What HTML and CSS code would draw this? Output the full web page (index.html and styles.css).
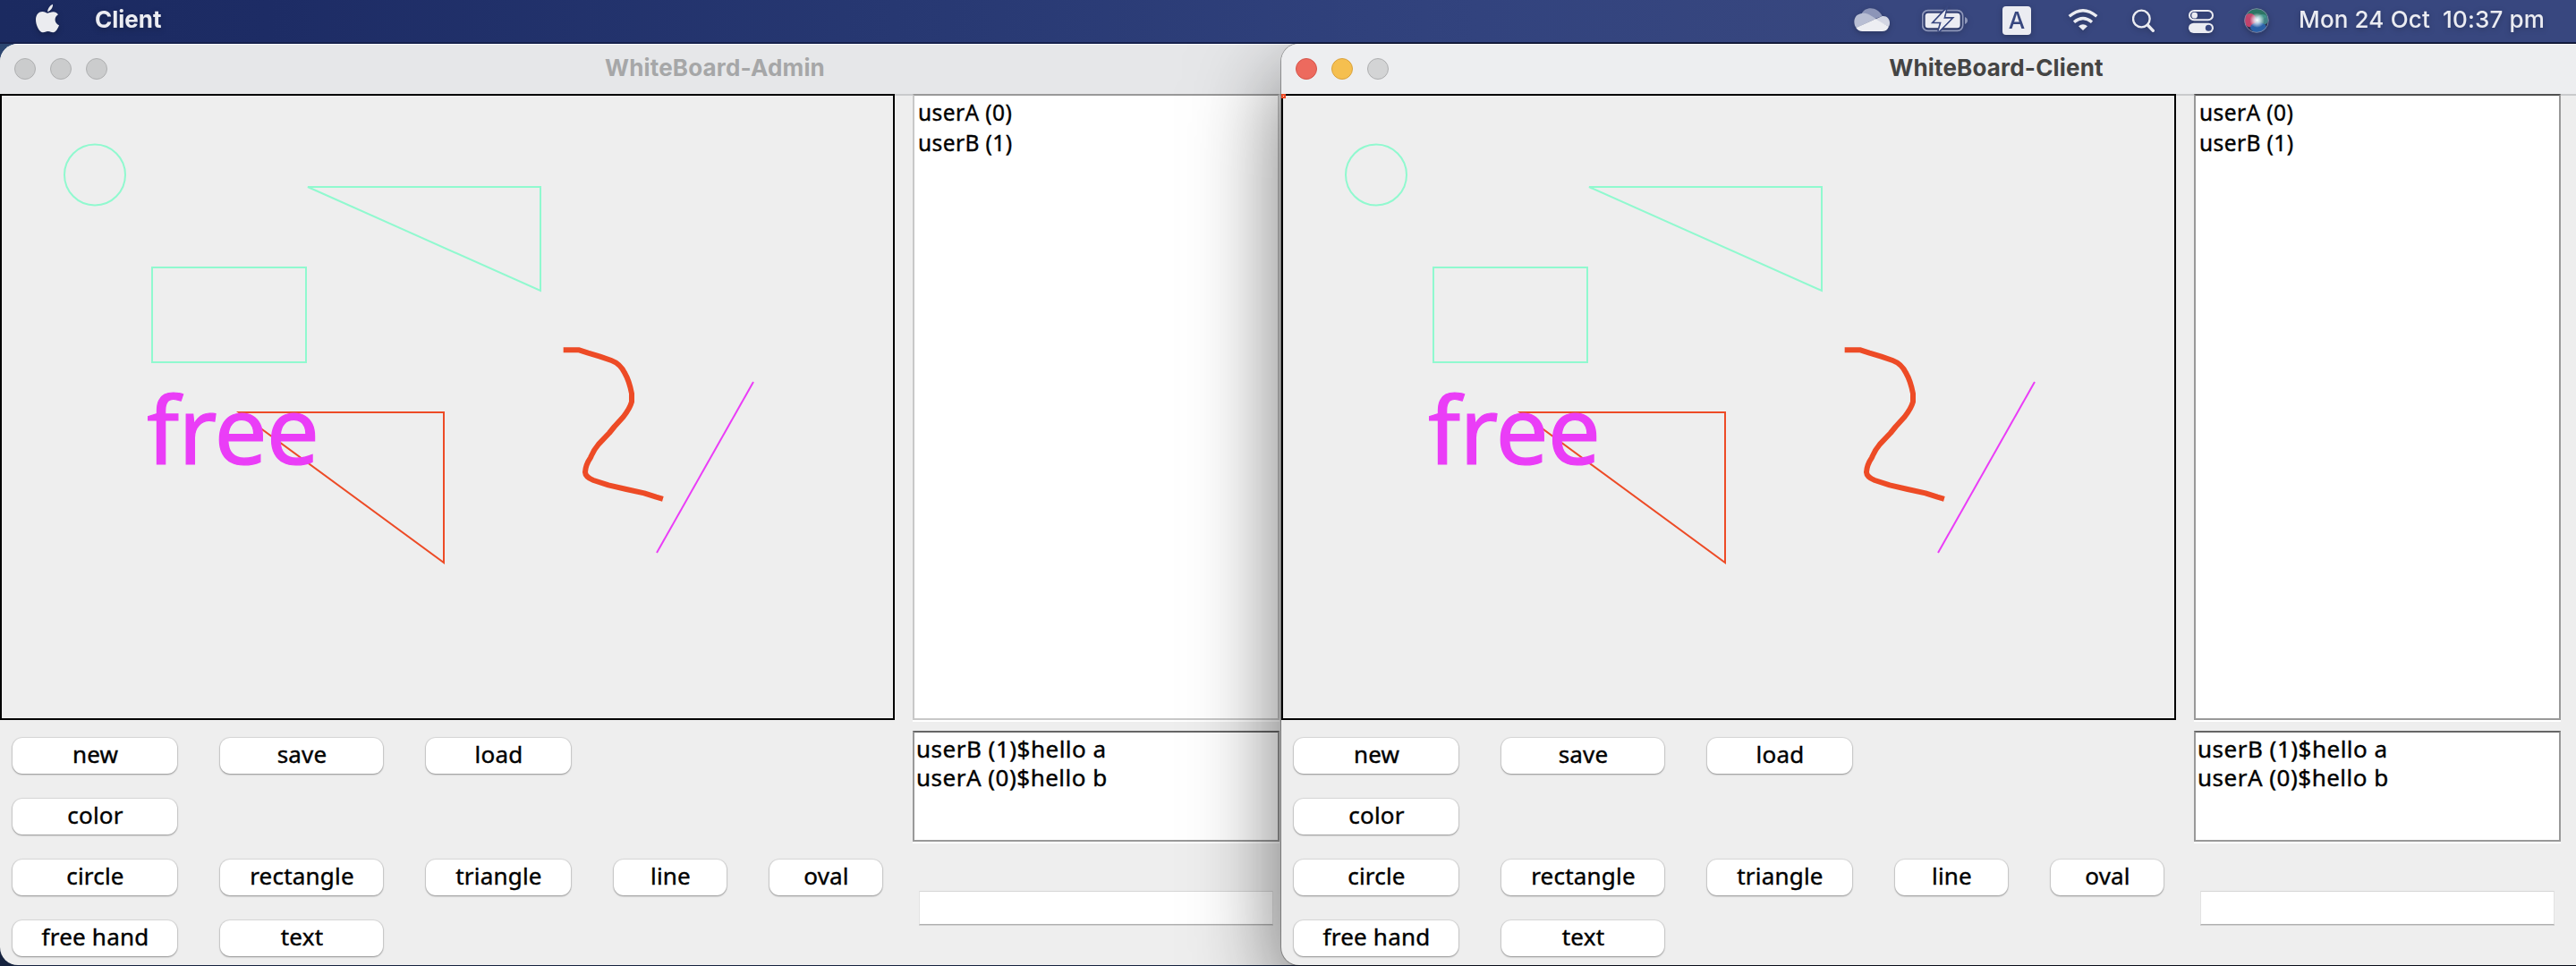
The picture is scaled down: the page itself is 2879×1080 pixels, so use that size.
FILE: index.html
```html
<!DOCTYPE html>
<html lang="en">
<head>
<meta charset="utf-8">
<title>WhiteBoard</title>
<link rel="stylesheet" href="styles.css">
</head>
<body>
<header class="menubar">
  <svg class="apple" viewBox="120 0 78 141" width="26" height="47"><path fill="#ebecf0" d="M159 39c2-12 8-21 18-25 1 11-7 23-18 25zM160 44c5 0 10-4 19-4 6 0 12 3 16 9-15 9-13 29 3 36-3 9-11 24-20 24-6 0-9-4-17-4s-11 4-17 4c-12 0-24-24-24-42 0-19 11-28 22-28 8 0 13 5 18 5z"/></svg>
  <span class="app-name">Client</span>
  <div class="tray">
    <svg viewBox="36 0 228 141" width="76" height="47">
      <path fill="#8c95b8" d="M62 46C72 20 116 20 131 54L98 66z"/>
      <path fill="#b8bed3" d="M62 45c18-3 28 6 48 18L44 93C32 80 34 48 62 45z"/>
      <path fill="#d3d6e3" d="M104 66l27-12c15-2 25 9 25 23 0 5-1 9-3 12z"/>
      <path fill="#edeef2" d="M43 93l65-29 45 25c-4 10-11 16-23 16H64c-9 0-16-4-21-12z"/>
    </svg>
    <svg viewBox="264 0 270 141" width="90" height="47">
      <rect x="266" y="35" width="135" height="68" rx="18" fill="none" stroke="#8f98ba" stroke-width="5"/>
      <path fill="#8f98ba" d="M408 57c12 4 12 20 0 24z"/>
      <rect x="275" y="44" width="117" height="50" rx="10" fill="#ebecf2"/>
      <path d="M344 32l-39 42h24l-9 31 42-43h-25z" fill="#ebecf2" stroke="#38477f" stroke-width="10" paint-order="stroke"/>
      <path d="M344 34l-37 38h24l-9 30 38-38h-25z" fill="#ebecf2"/>
    </svg>
    <svg viewBox="534 0 216 141" width="72" height="47">
      <rect x="534" y="21" width="96" height="96" rx="12" fill="#ebecf2"/>
      <text class="input-letter" x="582" y="96" text-anchor="middle">A</text>
    </svg>
    <svg viewBox="750 0 219 141" width="73" height="47">
      <g fill="none" stroke="#ebecf2" stroke-width="10"><path d="M758 55q46-40 92 0"/><path d="M774 74q30-25 60 0"/></g>
      <path fill="#ebecf2" d="M789 88q15-13 30 0l-15 14z"/>
    </svg>
    <svg viewBox="969 0 189 141" width="63" height="47">
      <g fill="none" stroke="#ebecf2"><circle cx="1000" cy="63" r="28" stroke-width="7"/><path d="M1021 84l18 19" stroke-width="10" stroke-linecap="round"/></g>
    </svg>
    <svg viewBox="1158 0 186 141" width="62" height="47">
      <rect x="1161" y="36" width="78" height="31" rx="15.500" fill="none" stroke="#ebecf2" stroke-width="6"/><circle cx="1178" cy="51.500" r="10" fill="#ebecf2"/>
      <rect x="1158" y="77" width="84" height="34" rx="17" fill="#ebecf2"/><circle cx="1225" cy="94" r="10.500" fill="#38477f"/>
    </svg>
    <svg viewBox="1344 0 182 141" width="60.67" height="47">
      <defs><radialGradient id="glow"><stop offset="0" stop-color="#fff"/><stop offset=".35" stop-color="#e8f4ff" stop-opacity=".8"/><stop offset="1" stop-color="#fff" stop-opacity="0"/></radialGradient>
      <clipPath id="orb"><circle cx="1386" cy="69" r="41"/></clipPath></defs>
      <circle cx="1386" cy="69" r="41" fill="#2b3050"/>
      <g clip-path="url(#orb)">
        <ellipse cx="1388" cy="48" rx="34" ry="20" fill="#2e7d66" opacity=".9"/>
        <ellipse cx="1364" cy="68" rx="21" ry="23" fill="#d0466f" opacity=".9"/>
        <ellipse cx="1406" cy="66" rx="20" ry="18" fill="#4a9e98" opacity=".75"/>
        <ellipse cx="1392" cy="92" rx="27" ry="17" fill="#2a66b0" opacity=".9"/>
        <circle cx="1388" cy="68" r="25" fill="url(#glow)"/>
      </g>
      <circle cx="1386" cy="69" r="40" fill="none" stroke="#7a86a8" stroke-width="3"/>
    </svg>
    <span class="clock">Mon 24 Oct&nbsp; 10:37 pm</span>
  </div>
</header>

<main class="desktop">
  <section class="window admin">
    <div class="titlebar">
      <div class="lights"><i></i><i></i><i></i></div>
      <h1>WhiteBoard-Admin</h1>
    </div>
    <div class="content">
      <div class="left">
        <svg class="board" viewBox="0 105 1000 700" width="1000" height="700">
          <rect class="frame" x="1" y="106" width="998" height="698"/>
          <g class="mint"><circle cx="106" cy="195.500" r="34"/><path d="M344 209H604V325z"/><rect x="170" y="299" width="172" height="106"/></g>
          <path class="red" d="M267 461H496V629z"/>
          <path class="red brush" transform="translate(600 370) scale(.3333)" d="M98 64H142L172 74L212 86L250 99Q280 110 295 142Q310 168 318 210V238Q312 260 290 288L260 321L243 342L207 380Q190 400 180 425Q163 450 162 474Q163 490 190 501L240 517L300 531L360 544L400 557L414 561"/>
          <path class="pink" d="M842 427L734 618"/>
          <text class="note" x="164" y="519" textLength="193">free</text>
        </svg>
        <div class="tools">
          <button>new</button><button>save</button><button>load</button>
          <button class="first">color</button>
          <button class="first">circle</button><button>rectangle</button><button>triangle</button><button>line</button><button>oval</button>
          <button class="first">free hand</button><button>text</button>
        </div>
      </div>
      <div class="side">
        <ul class="users"><li>userA (0)</li><li>userB (1)</li></ul>
        <div class="chat"><p>userB (1)$hello a</p><p>userA (0)$hello b</p></div>
        <div class="entry"></div>
      </div>
    </div>
  </section>

  <section class="window client">
    <div class="titlebar">
      <div class="lights"><i class="close"></i><i class="minimise"></i><i></i></div>
      <h1>WhiteBoard-Client</h1>
    </div>
    <div class="content">
      <div class="left">
        <svg class="board" viewBox="0 105 1000 700" width="1000" height="700">
          <rect class="frame" x="1" y="106" width="998" height="698"/>
          <rect class="red" x="1" y="106" width="3" height="3"/>
          <g class="mint"><circle cx="106" cy="195.500" r="34"/><path d="M344 209H604V325z"/><rect x="170" y="299" width="172" height="106"/></g>
          <path class="red" d="M267 461H496V629z"/>
          <path class="red brush" transform="translate(600 370) scale(.3333)" d="M98 64H142L172 74L212 86L250 99Q280 110 295 142Q310 168 318 210V238Q312 260 290 288L260 321L243 342L207 380Q190 400 180 425Q163 450 162 474Q163 490 190 501L240 517L300 531L360 544L400 557L414 561"/>
          <path class="pink" d="M842 427L734 618"/>
          <text class="note" x="164" y="519" textLength="193">free</text>
        </svg>
        <div class="tools">
          <button>new</button><button>save</button><button>load</button>
          <button class="first">color</button>
          <button class="first">circle</button><button>rectangle</button><button>triangle</button><button>line</button><button>oval</button>
          <button class="first">free hand</button><button>text</button>
        </div>
      </div>
      <div class="side">
        <ul class="users"><li>userA (0)</li><li>userB (1)</li></ul>
        <div class="chat"><p>userB (1)$hello a</p><p>userA (0)$hello b</p></div>
        <div class="entry"></div>
      </div>
    </div>
  </section>
</main>
</body>
</html>
```
FILE: styles.css
```css
* { box-sizing: border-box; margin: 0; padding: 0; }

body {
  width: 2879px;
  height: 1080px;
  overflow: hidden;
  background: #16233f;
  font-family: "Noto Sans", "Open Sans", sans-serif;
  font-size: 26px;
  color: #000;
}

svg { display: block; flex: none; }

.menubar {
  display: flex;
  height: 47px;
  padding-left: 40px;
  background: linear-gradient(90deg, #1b2a60 0, #1d2c65 300px, #273872 1000px, #32437e 1650px, #38477f 2100px);
  font-family: Inter, "Liberation Sans", sans-serif;
  line-height: 43px;
  color: #ebecf2;
}
.menubar svg, .app-name, .clock { filter: drop-shadow(0 2px 3px rgba(0, 0, 0, .25)); }
.app-name { margin-left: 40px; font-weight: 700; }
.tray { display: flex; margin-left: auto; }
.clock { width: 310px; font-weight: 500; letter-spacing: .15px; white-space: nowrap; }
.input-letter { font: 500 78px Inter, sans-serif; fill: #38477f; }

.desktop {
  display: grid;
  grid-template-columns: 1432px 1447px;
  height: 1033px;
  padding-top: 2px;
  overflow: hidden;
  background: linear-gradient(#2c4670, #16233f);
  box-shadow: inset 0 2px #16214d;
}

.window {
  width: 1598px;
  height: 1030px;
  border-radius: 20px;
  background: #eee;
  overflow: hidden;
}
.client {
  position: relative;
  box-shadow: 0 0 0 1px rgba(0, 0, 0, .3), 0 36px 100px rgba(0, 0, 0, .55);
}

.titlebar {
  display: grid;
  grid-template-columns: 1fr auto 1fr;
  height: 56px;
  padding-left: 16px;
  border-top: 1px solid #fff;
  background: #e6e7e9;
  color: #a6a7a8;
}
.client .titlebar { background: #edeef0; color: #444; }
.titlebar h1 {
  font: 700 26px/51px Inter, "Liberation Sans", sans-serif;
  letter-spacing: .17px;
  transform: translateX(-8px);
}
.lights { display: flex; gap: 16px; padding-top: 15px; }
.lights i {
  width: 24px;
  height: 24px;
  border: 1px solid #aeafb0;
  border-radius: 50%;
  background: #cbcccd;
}
.client .lights i { background: #d3d4d5; }
.client .lights .close { background: #ed6a5e; border-color: #d4544a; }
.client .lights .minimise { background: #f5bf4f; border-color: #d9a13c; }

.content { display: flex; gap: 20px; box-shadow: inset 0 2px #c9cacc; }
.left { width: 1000px; }

.frame { fill: #eee; stroke: #000; stroke-width: 2; }
.mint, .red, .pink { fill: none; stroke-width: 2; }
.mint { stroke: #90f9cf; }
.red { stroke: #ed4b26; }
.pink { stroke: #ea3df7; }
.brush { stroke-width: 18; stroke-linejoin: round; stroke-linecap: square; }
.note { font-size: 105px; fill: #ea3df7; stroke: #ea3df7; stroke-width: 1.2; }

.tools {
  display: grid;
  grid-template-columns: 184px 182px 162px 126px 126px;
  gap: 28px 48px;
  padding: 20px 14px 0;
}
.tools .first { grid-column-start: 1; }
.tools button {
  height: 40px;
  padding: 0 0 4px 1px;
  border: 0;
  border-radius: 11px;
  background: #fff;
  box-shadow: 0 0 1px 1px rgba(0, 0, 0, .09), 0 1px 2px rgba(0, 0, 0, .33);
  font: 26px/36px "Noto Sans", "Open Sans", sans-serif;
  letter-spacing: .2px;
  color: #000;
  -webkit-text-stroke: .4px #000;
}

.side { width: 410px; -webkit-text-stroke: .4px #000; }
.users, .chat {
  border: 2px solid #999;
  background: #fff;
  box-shadow: 0 2px #fff;
}
.users {
  height: 700px;
  padding: 2px 4px;
  border-top-color: #505050;
  list-style: none;
  font-size: 24.500px;
  line-height: 34px;
  letter-spacing: .4px;
}
.admin .users { border-color: #999 #c8c8c8 #c8c8c8; }
.chat {
  height: 124px;
  margin-top: 12px;
  padding: 2px;
  border-top-color: #666;
  line-height: 32px;
  letter-spacing: .5px;
}
.entry {
  width: 396px;
  height: 38px;
  margin: 55px 0 0 7px;
  border: 1px solid #e3e3e3;
  border-top-color: #d6d6d6;
  border-bottom-color: #b0b0b0;
  background: #fff;
  box-shadow: 0 1px #cfcfcf;
}
```
